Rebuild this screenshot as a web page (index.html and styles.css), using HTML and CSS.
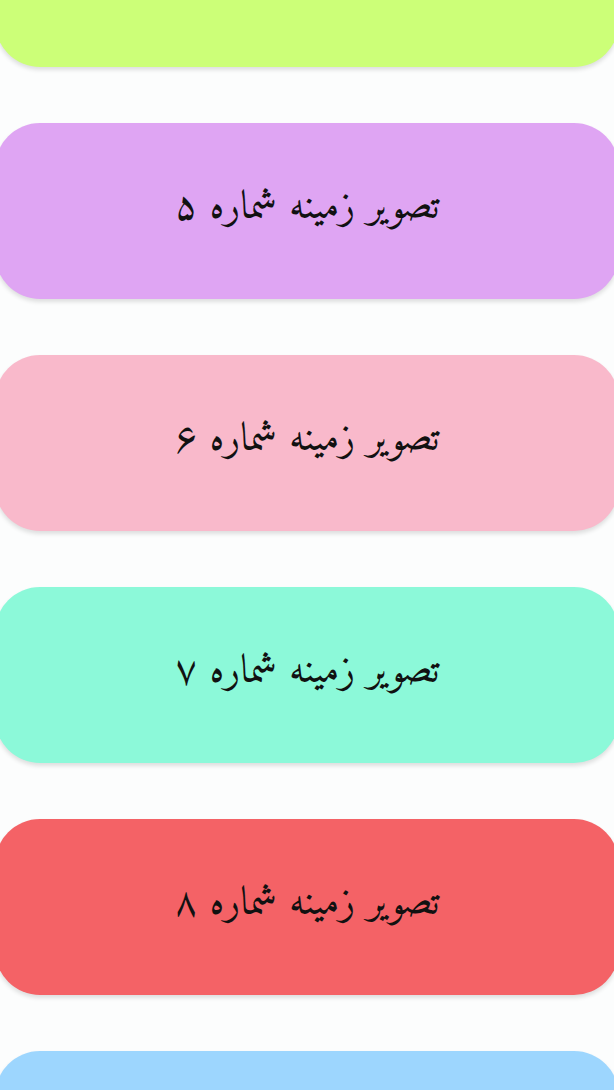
FILE: index.html
```html
<!DOCTYPE html>
<html lang="fa" dir="rtl">
<head>
    <meta charset="UTF-8">
    <meta name="viewport" content="width=device-width, initial-scale=1.0">
    <title>تصاویر زمینه</title>
    <link rel="stylesheet" href="styles.css">
</head>
<body>

    <!-- لیست تصاویر زمینه -->
    <div class="list">
        <div class="card lime">تصویر زمینه شماره ۴</div>
        <div class="card purple">تصویر زمینه شماره ۵</div>
        <div class="card pink">تصویر زمینه شماره ۶</div>
        <div class="card mint">تصویر زمینه شماره ۷</div>
        <div class="card red">تصویر زمینه شماره ۸</div>
        <div class="card blue">تصویر زمینه شماره ۹</div>
    </div>

</body>
</html>
```

FILE: styles.css
```css
body {
    margin: 0;
    background-color: #fcfdfd;
    font-family: "Amiri", "Noto Naskh Arabic", serif;
    color: #111;
    overflow: hidden;
    height: 1090px;
}
/* کارت‌ها کمی از لبه‌های صفحه بیرون می‌زنند */
.list {
    display: flex;
    flex-direction: column;
    gap: 56px;
    margin: -109px -5px 0;
}
.card {
    height: 176px;
    border-radius: 45px;
    display: flex;
    align-items: center;
    justify-content: center;
    padding-bottom: 6px;
    box-sizing: border-box;
    font-size: 40px;
    line-height: 1;
    font-feature-settings: "liga" 0;
    box-shadow: 0px 3px 4px rgba(0, 0, 0, 0.12);
}
.lime { background-color: #ccff78; }
.purple { background-color: #dfa5f3; }
.pink { background-color: #f9b9cb; }
.mint { background-color: #8cf9d9; }
.red { background-color: #f46266; }
.blue { background-color: #9dd6fe; }
```
